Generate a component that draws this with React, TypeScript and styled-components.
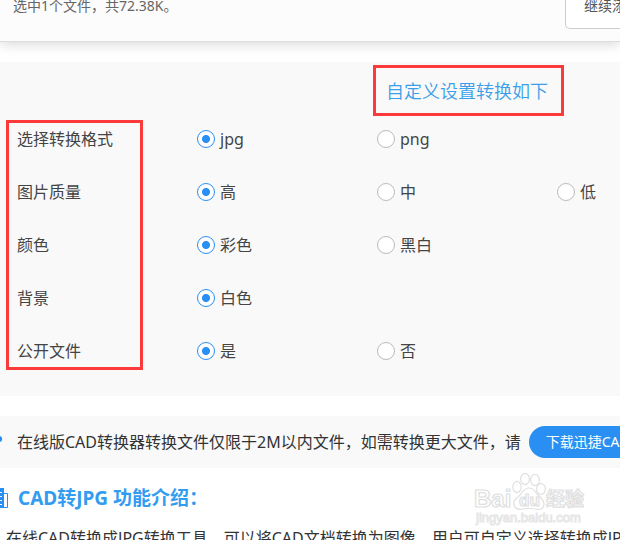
import React from "react";
import styled, { createGlobalStyle } from "styled-components";

const blue = "#2a8ff2";
const red = "#fc3a3a";

const GlobalStyle = createGlobalStyle`
  * { box-sizing: border-box; }
  body {
    margin: 0;
    background: #fff;
    color: #444;
    font-family: "Noto Sans", "Noto Sans CJK SC", sans-serif;
    font-size: 16px;
    overflow: hidden;
  }
  button, input { font: inherit; }
`;

const Page = styled.div`
  position: relative;
  overflow: hidden;
  white-space: nowrap;
`;

const FileBar = styled.header`
  display: flex;
  justify-content: space-between;
  align-items: flex-start;
  padding: 0 0 12px 13px;
  background: #fcfcfc;
  border-bottom: 1px solid #dcdcdc;
  box-shadow: 0 2px 12px rgba(0, 0, 0, 0.16);
`;

const FileCount = styled.p`
  margin: 0;
  font-size: 14px;
  line-height: 12px;
  color: #666;
`;

const AddButton = styled.button`
  flex: none;
  margin-right: -67px;
  padding: 0 18px 16px;
  border: 1px solid #ccc;
  border-top: 0;
  border-radius: 0 0 5px 5px;
  background: #fff;
  color: #555;
  font-size: 14px;
  line-height: 12px;
`;

const Settings = styled.section`
  margin-top: 20px;
  padding: 3px 0 26px 6px;
  background: #f9f9f9;
`;

const SettingsTitle = styled.h2`
  width: fit-content;
  margin: 0 56px 4px auto;
  padding: 1px 13px 0 10px;
  border: 3px solid ${red};
  color: #3a9fe8;
  font-size: 18px;
  font-weight: 350;
  line-height: 44px;
`;

const SettingsBody = styled.div`
  display: grid;
  grid-template-columns: 137px 1fr;
  column-gap: 54px;
`;

const Names = styled.div`
  display: grid;
  row-gap: 21px;
  padding-left: 8px;
  border: 3px solid ${red};
`;

const Name = styled.span`
  line-height: 32px;
`;

const Groups = styled.div`
  display: grid;
  row-gap: 21px;
  padding: 3px 0;
`;

const Group = styled.div`
  display: grid;
  grid-template-columns: repeat(3, 180px);
  align-items: center;
  height: 32px;
`;

const Option = styled.label`
  display: flex;
  align-items: center;
  gap: 5px;
  line-height: 32px;
`;

const Radio = styled.input`
  appearance: none;
  flex: none;
  width: 18px;
  height: 18px;
  margin: 0;
  border: 1px solid #bbb;
  border-radius: 50%;
  background: #fff;
  &:checked {
    border-color: ${blue};
    background: radial-gradient(circle, ${blue} 3.6px, #fff 4.4px);
  }
`;

const Notice = styled.section`
  display: flex;
  align-items: center;
  margin-top: 20px;
  padding: 10px 0;
  background: #f9f9f9;
  color: #333;
`;

const NoticeMark = styled.svg`
  flex: none;
  width: 17px;
  height: 32px;
`;

const NoticeText = styled.p`
  flex: none;
  margin: 0 8px 0 0;
  line-height: 32px;
`;

const Download = styled.button`
  flex: none;
  height: 32px;
  padding: 0 17px;
  border: 0;
  border-radius: 16px;
  background: ${blue};
  color: #fff;
  font-size: 14px;
  line-height: 32px;
`;

const IntroTitle = styled.h2`
  display: flex;
  align-items: center;
  gap: 9px;
  margin: 18px 0 12px;
  color: #329cf0;
  font-size: 19px;
  font-weight: 700;
  line-height: 24px;
`;

const IntroIcon = styled.svg`
  flex: none;
  width: 9px;
  height: 22px;
`;

const IntroText = styled.p`
  margin: 0;
  padding-left: 6px;
  color: #333;
  line-height: 32px;
`;

const Watermark = styled.svg`
  position: absolute;
  right: 30px;
  top: 470px;
  width: 120px;
  height: 60px;
  font-family: "Liberation Sans", "Noto Sans CJK SC", sans-serif;
  font-weight: 700;
  pointer-events: none;
`;

const settings = [
  { id: "format", name: "选择转换格式", options: ["jpg", "png"] },
  { id: "quality", name: "图片质量", options: ["高", "中", "低"] },
  { id: "color", name: "颜色", options: ["彩色", "黑白"] },
  { id: "background", name: "背景", options: ["白色"] },
  { id: "public", name: "公开文件", options: ["是", "否"] },
];

export default function App() {
  return (
    <>
      <GlobalStyle />
      <Page>
        <FileBar>
          <FileCount>选中1个文件，共72.38K。</FileCount>
          <AddButton type="button">继续添加文件</AddButton>
        </FileBar>

        <Settings>
          <SettingsTitle>自定义设置转换如下</SettingsTitle>
          <SettingsBody>
            <Names>
              {settings.map((s) => (
                <Name key={s.id} id={`name-${s.id}`}>{s.name}</Name>
              ))}
            </Names>
            <Groups>
              {settings.map((s) => (
                <Group key={s.id} role="radiogroup" aria-labelledby={`name-${s.id}`}>
                  {s.options.map((option, i) => (
                    <Option key={option}>
                      <Radio type="radio" name={s.id} value={option} defaultChecked={i === 0} />
                      {option}
                    </Option>
                  ))}
                </Group>
              ))}
            </Groups>
          </SettingsBody>
        </Settings>

        <Notice>
          <NoticeMark viewBox="0 0 17 32" aria-hidden="true">
            <circle cx="-1" cy="13" r="3.2" fill={blue} />
          </NoticeMark>
          <NoticeText>在线版CAD转换器转换文件仅限于2M以内文件，如需转换更大文件，请</NoticeText>
          <Download type="button">下载迅捷CAD转换器</Download>
        </Notice>

        <section>
          <IntroTitle>
            <IntroIcon viewBox="0 0 9 22" aria-hidden="true">
              <path d="M0 1h4v20H0z" fill={blue} />
              <path d="M0 5.5h2M0 9.5h2M0 13.5h2M0 17.5h2" stroke="#fff" />
              <path d="M4 6.5h3.5v14H4" fill="none" stroke={blue} />
            </IntroIcon>
            CAD转JPG 功能介绍：
          </IntroTitle>
          <IntroText>
            在线CAD转换成JPG转换工具，可以将CAD文档转换为图像，用户可自定义选择转换成JPG格式
          </IntroText>
        </section>

        <Watermark viewBox="0 0 120 60" aria-hidden="true">
          <g fill="#fff" stroke="#e0e0e0" strokeWidth="1.2">
            <ellipse cx="47" cy="17" rx="4.2" ry="5.6" />
            <ellipse cx="55" cy="9" rx="4.4" ry="5.6" />
            <ellipse cx="65" cy="10" rx="4.4" ry="5.6" />
            <ellipse cx="71" cy="19" rx="4.4" ry="5.4" />
            <path d="M59 18c-5 0-7 5-10 8-4 3-6 6-5 9 1 4 5 5 9 4 4-1 8-1 12 0 5 1 9 0 9-5 0-4-3-6-6-9-3-3-4-7-9-7z" />
            <text x="4" y="37" fontSize="24">Bai</text>
            <text x="49" y="36" fontSize="17">du</text>
            <text x="76" y="36" fontSize="19">经验</text>
          </g>
          <text x="6" y="52" fontSize="13" fontWeight="400" fill="#fff" stroke="#e6e6e6" strokeWidth="1">jingyan.baidu.com</text>
        </Watermark>
      </Page>
    </>
  );
}
